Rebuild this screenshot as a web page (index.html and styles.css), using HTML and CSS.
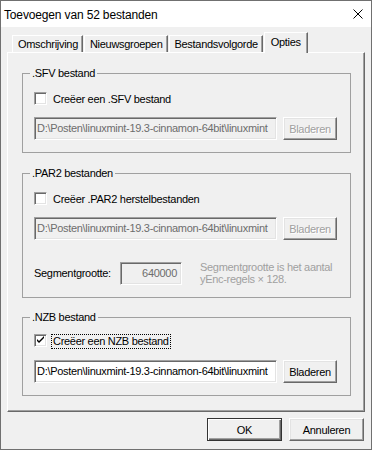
FILE: index.html
```html
<!DOCTYPE html>
<html lang="nl">
<head>
    <meta charset="UTF-8">
    <meta name="viewport" content="width=device-width, initial-scale=1.0">
    <title>Toevoegen van 52 bestanden</title>
    <link rel="stylesheet" href="styles.css">
</head>
<body>
    <div class="window">
        <div class="titlebar">
            <span class="title">Toevoegen van 52 bestanden</span>
            <svg class="close" width="10" height="10" viewBox="0 0 10 10">
                <path d="M0.5 0.5 L9.5 9.5 M9.5 0.5 L0.5 9.5" stroke="#000" stroke-width="1"/>
            </svg>
        </div>
        <div class="client">
            <div class="tabs">
                <div class="tab">Omschrijving</div>
                <div class="tab">Nieuwsgroepen</div>
                <div class="tab">Bestandsvolgorde</div>
                <div class="tab active">Opties</div>
            </div>
            <div class="panel">
                <fieldset class="group group-sfv">
                    <legend>.SFV bestand</legend>
                    <label class="check">
                        <span class="box"></span>
                        <span class="check-text">Creëer een .SFV bestand</span>
                    </label>
                    <div class="path-row">
                        <div class="edit disabled">D:\Posten\linuxmint-19.3-cinnamon-64bit\linuxmint</div>
                        <button class="btn browse" disabled>Bladeren</button>
                    </div>
                </fieldset>

                <fieldset class="group group-par">
                    <legend>.PAR2 bestanden</legend>
                    <label class="check">
                        <span class="box"></span>
                        <span class="check-text">Creëer .PAR2 herstelbestanden</span>
                    </label>
                    <div class="path-row">
                        <div class="edit disabled">D:\Posten\linuxmint-19.3-cinnamon-64bit\linuxmint</div>
                        <button class="btn browse" disabled>Bladeren</button>
                    </div>
                    <div class="segment-row">
                        <span class="segment-label">Segmentgrootte:</span>
                        <div class="edit disabled segment">640000</div>
                        <p class="hint">Segmentgrootte is het aantal<br>yEnc-regels × 128.</p>
                    </div>
                </fieldset>

                <fieldset class="group group-nzb">
                    <legend>.NZB bestand</legend>
                    <label class="check">
                        <span class="box">
                            <svg width="11" height="11" viewBox="0 0 11 11">
                                <path d="M2 4 L2 6 L4 8 L9 3 L9 1 L4 6 Z" fill="#000"/>
                            </svg>
                        </span>
                        <span class="check-text focused">Creëer een NZB bestand</span>
                    </label>
                    <div class="path-row">
                        <div class="edit">D:\Posten\linuxmint-19.3-cinnamon-64bit\linuxmint</div>
                        <button class="btn browse">Bladeren</button>
                    </div>
                </fieldset>
            </div>
            <div class="actions">
                <button class="btn default">OK</button>
                <button class="btn">Annuleren</button>
            </div>
        </div>
    </div>
</body>
</html>
```

FILE: styles.css
```css
body {
    margin: 0;
    font-family: "Liberation Sans", Arial, sans-serif;
    font-size: 11px;
    letter-spacing: -0.3px;
    color: #000;
    background: #fff;
}
.window {
    width: 372px;
    height: 450px;
    box-sizing: border-box;
    border: 1px solid #707070;
    background: #f0f0f0;
    display: flex;
    flex-direction: column;
}
.titlebar {
    height: 26px;
    flex: none;
    background: #fff;
    display: flex;
    align-items: center;
    padding-left: 3px;
}
.title {
    font-size: 12px;
    letter-spacing: -0.15px;
    margin-top: 1px;
}
.close {
    margin-left: auto;
    margin-right: 8px;
}
.client {
    padding: 6px 6px 0 6px;
}
.tabs {
    display: flex;
    align-items: flex-end;
    padding-left: 5px;
    height: 20px;
    margin-bottom: -1px;
    position: relative;
    z-index: 1;
}
.tab {
    height: 17px;
    line-height: 16px;
    padding: 0 4px 0 5px;
    margin-right: 1px;
    margin-bottom: 1px;
    box-sizing: border-box;
    border: 1px solid;
    border-color: #fff #696969 transparent #fff;
    border-bottom: none;
    box-shadow: inset -1px 0 #a0a0a0;
    background: #f0f0f0;
}
.tab.active {
    height: 21px;
    margin-bottom: 0;
    line-height: 18px;
    padding: 0 6px;
}
.panel {
    height: 360px;
    box-sizing: border-box;
    border: 1px solid;
    border-color: #fff #696969 #696969 #fff;
    box-shadow: inset -1px -1px #a0a0a0;
    padding: 14px 13px 0 14px;
    display: flex;
    flex-direction: column;
}
.group {
    margin: 0;
    flex: none;
    box-sizing: border-box;
    border: 1px solid #a0a0a0;
    padding: 12px 11px 0 11px;
    min-width: 0;
}
.group-sfv {
    height: 86px;
}
.group-par {
    height: 131px;
    margin-top: 14px;
}
.group-nzb {
    height: 85px;
    margin-top: 13px;
    padding-top: 10px;
}
.group-nzb .path-row {
    margin-top: 11px;
}
.group legend {
    line-height: 13px;
    height: 13px;
    padding: 0 2px;
    margin-left: -4px;
}
.check {
    display: flex;
    align-items: flex-start;
    height: 15px;
}
.box {
    width: 13px;
    height: 13px;
    flex: none;
    box-sizing: border-box;
    background: #fff;
    border: 1px solid;
    border-color: #a0a0a0 #fff #fff #a0a0a0;
    box-shadow: inset 1px 1px #696969, inset -1px -1px #e3e3e3;
    display: flex;
    align-items: center;
    justify-content: center;
}
.box svg {
    display: block;
}
.check-text {
    margin-left: 4px;
    padding: 0 1px;
    line-height: 13px;
    border: 1px dotted transparent;
}
.check-text.focused {
    border-color: #000;
}
.path-row {
    display: flex;
    align-items: center;
    gap: 6px;
    margin-top: 10px;
}
.edit {
    width: 243px;
    height: 23px;
    flex: none;
    box-sizing: border-box;
    border: 1px solid;
    border-color: #a0a0a0 #fff #fff #a0a0a0;
    box-shadow: inset 1px 1px #696969, inset -1px -1px #e3e3e3;
    background: #fff;
    padding: 0 2px;
    line-height: 21px;
    white-space: nowrap;
    overflow: hidden;
}
.edit.disabled {
    background: #f0f0f0;
    color: #6d6d6d;
}
.btn {
    font-family: inherit;
    font-size: 11px;
    letter-spacing: -0.3px;
    color: #000;
    height: 23px;
    box-sizing: border-box;
    background: #f0f0f0;
    border: 1px solid;
    border-color: #fff #696969 #696969 #fff;
    box-shadow: inset -1px -1px #a0a0a0, inset 1px 1px #e3e3e3;
    padding: 0;
}
.btn:disabled {
    color: #a0a0a0;
    text-shadow: 1px 1px #fff;
}
.browse {
    width: 54px;
}
.segment-row {
    display: flex;
    align-items: center;
    margin-top: 21px;
}
.segment-label {
    width: 86px;
}
.edit.segment {
    width: 62px;
    text-align: right;
    padding-right: 4px;
}
.hint {
    margin: 0 0 0 18px;
    line-height: 12px;
    white-space: nowrap;
    color: #a0a0a0;
}
.actions {
    display: flex;
    justify-content: flex-end;
    gap: 7px;
    margin-top: 6px;
    padding-right: 1px;
}
.actions .btn {
    width: 75px;
}
.btn.default {
    border-color: #333;
    box-shadow: inset 1px 1px #fff, inset -1px -1px #696969, inset -2px -2px #a0a0a0;
}
```
